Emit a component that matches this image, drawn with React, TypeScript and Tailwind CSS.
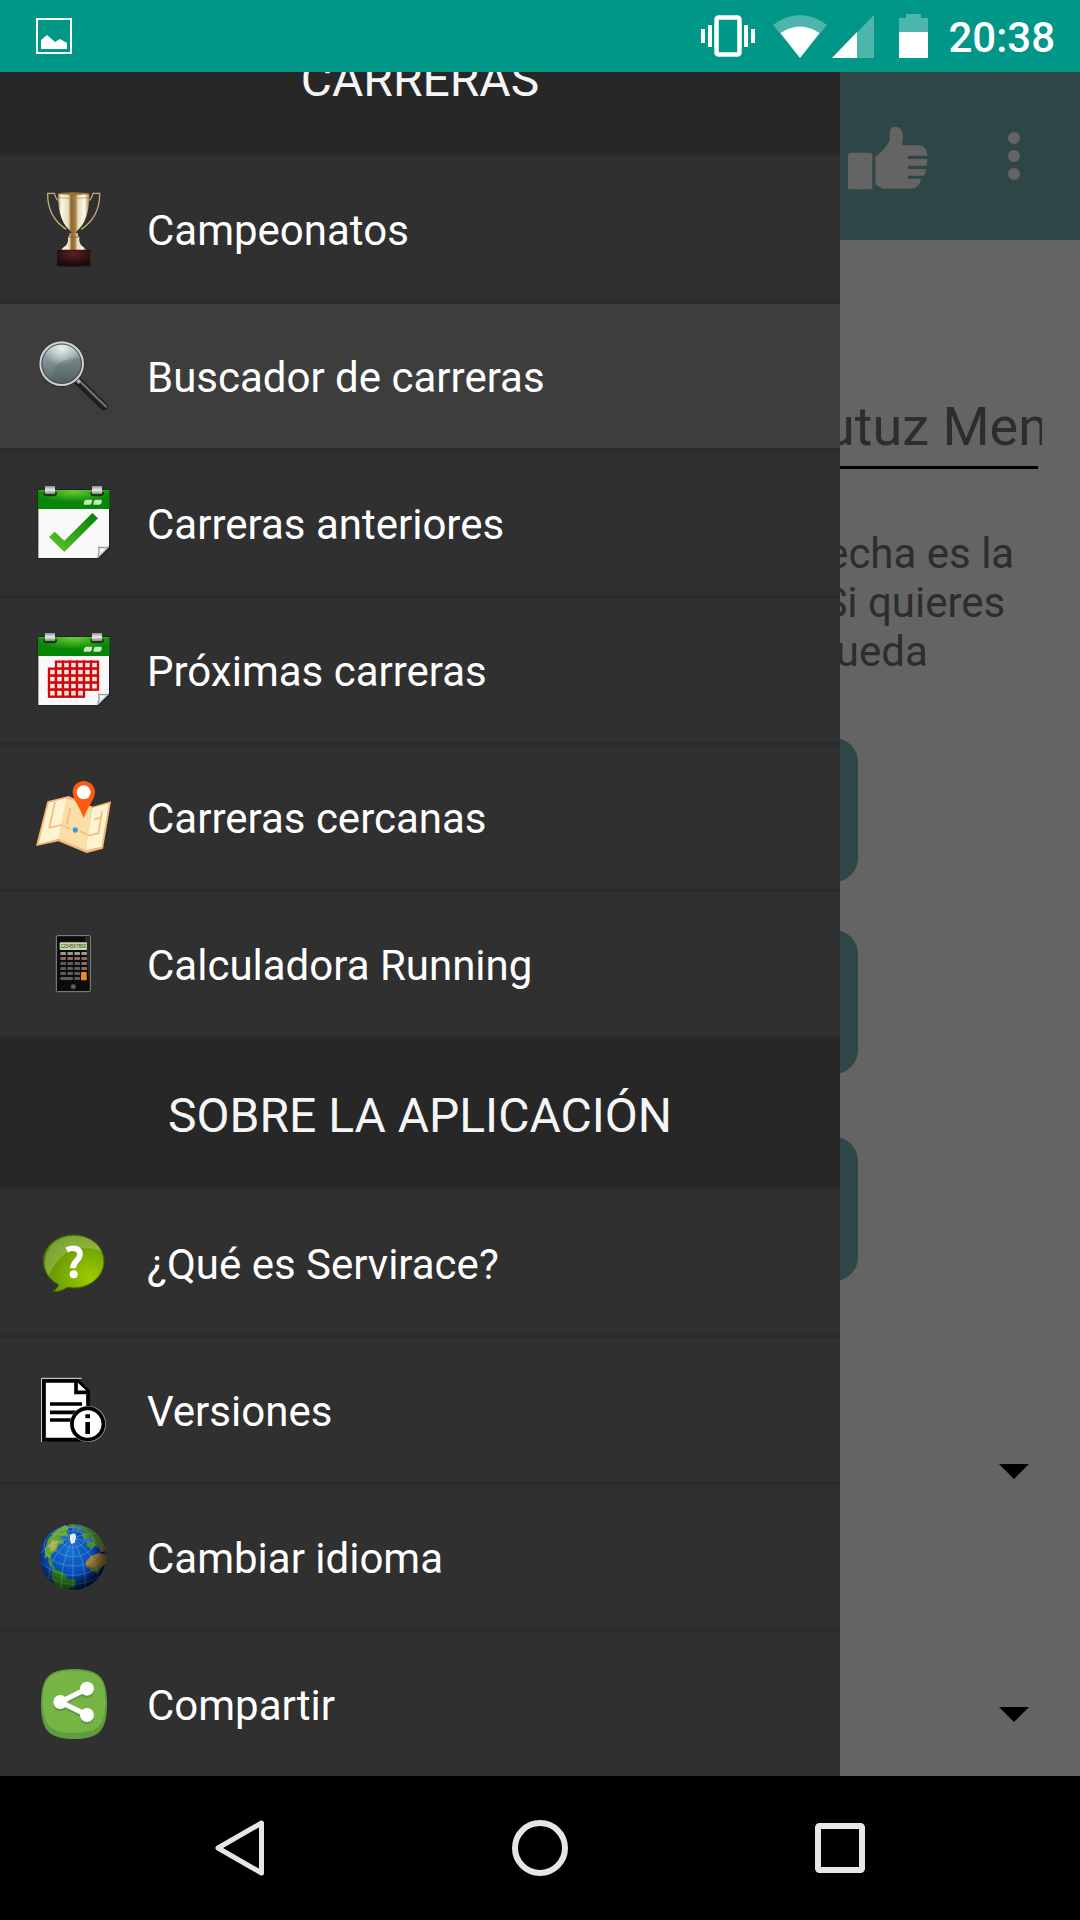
import React from "react";

const Trophy = () => (
  <svg viewBox="0 0 240 240" className="size-20 shrink-0" aria-hidden="true">
    <defs>
      <linearGradient id="cup" x1="0" x2="1">
        <stop offset="0" stopColor="#a58445" />
        <stop offset=".1" stopColor="#fdf8e6" />
        <stop offset=".33" stopColor="#e9ddb9" />
        <stop offset=".42" stopColor="#8a6530" />
        <stop offset=".56" stopColor="#a98241" />
        <stop offset=".64" stopColor="#e8dcb8" />
        <stop offset=".85" stopColor="#fffbea" />
        <stop offset="1" stopColor="#9c7d42" />
      </linearGradient>
      <radialGradient id="plinth" cy=".3" r=".7">
        <stop offset="0" stopColor="#5a2224" />
        <stop offset="1" stopColor="#1f0708" />
      </radialGradient>
    </defs>
    <ellipse cx="119" cy="229" rx="57" ry="4" fill="#141414" />
    <g fill="none" stroke="#c8ab70" strokeWidth="4">
      <path d="M76 35C66 34 64 22 61 13H41C40 60 62 98 96 121" />
      <path d="M162 35c10-1 12-13 15-22h20c1 47-21 85-55 108" />
    </g>
    <path d="M72 14h94c1 45-9 83-31 106q-8 6-10 13h-12q-2-7-10-13C81 97 71 59 72 14Z" fill="url(#cup)" />
    <ellipse cx="119" cy="14" rx="47" ry="4" fill="#9b7434" />
    <path d="M73 26q46 5 92 0" stroke="#a98c52" strokeWidth="2" fill="none" />
    <path d="M106 132h26q-4 6 4 12-2 18 7 26 10 6 14 13H81q4-7 14-13 9-8 7-26 8-6 4-12Z" fill="url(#cup)" />
    <path d="M103 144h32" stroke="#8a6530" strokeWidth="3" />
    <rect x="69" y="182" width="100" height="46" rx="2" fill="url(#plinth)" />
  </svg>
);

const Magnifier = () => (
  <svg viewBox="42 78 240 240" className="size-20 shrink-0" aria-hidden="true">
    <defs>
      <linearGradient id="lens" x2="0" y2="1">
        <stop offset="0" stopColor="#b9caca" />
        <stop offset=".45" stopColor="#7d9092" />
        <stop offset="1" stopColor="#536063" />
      </linearGradient>
      <radialGradient id="shine" cx=".5" cy=".12" r=".45">
        <stop offset="0" stopColor="#fff" stopOpacity=".75" />
        <stop offset="1" stopColor="#fff" stopOpacity="0" />
      </radialGradient>
    </defs>
    <path d="M178 218l74 71" stroke="#1d1d1d" strokeWidth="24" strokeLinecap="round" />
    <path d="M184 218l74 72" stroke="#6c6e72" strokeWidth="7" strokeLinecap="round" />
    <path d="M166 204l14 14" stroke="#b0b0b0" strokeWidth="11" />
    <circle cx="125" cy="161" r="69" fill="#242424" />
    <circle cx="125" cy="161" r="64" fill="url(#lens)" stroke="#d4d0d0" strokeWidth="6" />
    <circle cx="125" cy="161" r="59" fill="url(#shine)" stroke="#3f4a4c" strokeWidth="3" />
    <path d="M97 206c2-38 22-62 86-62 8 40-18 75-57 75-12 0-22-5-29-13Z" fill="#465558" opacity=".25" />
  </svg>
);

function Calendar({ id, children }: { id: string; children: React.ReactNode }) {
  return (
    <svg viewBox="0 0 240 240" className="size-20 shrink-0" aria-hidden="true">
      <defs>
        <radialGradient id={id + "-top"} cx=".5" cy=".1" r=".55">
          <stop offset="0" stopColor="#66c830" />
          <stop offset="1" stopColor="#078507" />
        </radialGradient>
        <linearGradient id={id + "-ring"} x2="0" y2="1">
          <stop offset="0" stopColor="#8f8f8f" />
          <stop offset=".5" stopColor="#ececec" />
          <stop offset="1" stopColor="#858585" />
        </linearGradient>
      </defs>
      <path d="M10 18h219v177l-34 33H10Z" fill="#202020" />
      <path d="M13 78h212v114l-34 33H13Z" fill="#f9f9f9" />
      <path d="M12 21h215v57H12Z" fill={"url(#" + id + "-top)"} />
      <path d="M13 22h213" stroke="#7ccf55" strokeWidth="2" opacity=".6" />
      <path d="M28 28h41v6q-3 6-9 6H36q-7 0-8-6Zm141 0h41v6q-3 6-9 6h-24q-7 0-8-6Z" fill="#143d0c" />
      <path d="M33 9h30v24H33Zm141 0h30v24h-30Z" fill={"url(#" + id + "-ring)"} />
      <path d="M155 50h20l-2 10-4 5h-20l1-9Zm28 0h20v9l-5 6h-20l1-9Z" fill="#c5e9c0" />
      {children}
      <path d="M191 225l34-33q-12 4-31 0 4 15-3 33Z" fill="#ddd" stroke="#888" strokeWidth="3" />
      <path d="M198 211l14-14h-12Z" fill="#fff" />
    </svg>
  );
}

const CheckCalendar = () => (
  <Calendar id="done">
    <defs>
      <linearGradient id="tick" x1="0" x2="1" y1="1" y2="0">
        <stop offset="0" stopColor="#5fc832" />
        <stop offset="1" stopColor="#067d06" />
      </linearGradient>
    </defs>
    <path d="M45 162l17-16 29 27 84-83 17 16-101 101Z" fill="url(#tick)" />
  </Calendar>
);

const dayCells = Array.from({ length: 35 }, (_, i) => i).filter((i) => i !== 0 && i < 33);

const GridCalendar = () => (
  <Calendar id="next">
    {dayCells.map((i) => (
      <rect
        key={i}
        x={45 + (i % 7) * 21}
        y={95 + Math.floor(i / 7) * 21}
        width="21"
        height="21"
        fill="#f6e4e4"
        stroke="#d00808"
        strokeWidth="7"
      />
    ))}
  </Calendar>
);

const MapPin = () => (
  <svg viewBox="42 501 240 240" className="size-20 shrink-0" aria-hidden="true">
    <path d="M82 574l64-16 72 32 55-16-24 142-49 13-85-35-67 14Z" fill="#f2b877" />
    <path d="M86 579l54-15-24 122-60 15Z" fill="#fff3d0" />
    <path d="M140 564l75 31-17 126-82-35Z" fill="#fbdfa6" />
    <path d="M215 595l51-14-22 129-46 11Z" fill="#fff3d0" />
    <path d="M215 595l-8 62 10-64 12-16Z" fill="#e2b981" />
    <g fill="none" stroke="#edbd85" strokeWidth="5">
      <path d="M105 576l-17 77 36-8 28 12M151 594l-11 50M179 664l30 13 27-8 10-66M223 628l18-5" />
    </g>
    <path d="M191 513c19 0 34 15 34 34 0 20-23 45-34 78-11-33-33-58-33-78 0-19 14-34 33-34Z" fill="#ff5a12" />
    <circle cx="191" cy="547" r="21" fill="#fff" />
    <circle cx="166" cy="660" r="8" fill="#4a9bd0" />
  </svg>
);

const Calculator = () => (
  <svg viewBox="42 162 240 240" className="size-20 shrink-0" aria-hidden="true">
    <rect x="109" y="197" width="102" height="168" rx="4" fill="#0c0c0c" stroke="#8d8d8d" strokeWidth="3" />
    <path d="M195 199h13v150Z" fill="#2b2b2b" />
    <rect x="119" y="217" width="82" height="23" rx="3" fill="#c9d9a8" />
    <text x="160" y="233" textAnchor="middle" fontSize="14" fontFamily="Liberation Sans, sans-serif" fill="#2e3a22">
      1234567890
    </text>
    {[0, 1, 2, 3, 4, 5].map((r) =>
      [0, 1, 2, 3].map((c) =>
        r > 3 && c === 3 ? null : (
          <rect
            key={r + "-" + c}
            x={121 + c * 21}
            y={246 + r * 15}
            width={r === 5 && c === 0 ? 24 : 17}
            height="9"
            rx="2"
            fill={r === 0 ? "#999" : r === 1 || c === 3 ? "#96685b" : "#5c5c5c"}
          />
        ),
      ),
    )}
    <rect x="183" y="306" width="17" height="25" rx="2" fill="#f58a1f" />
    <circle cx="160" cy="350" r="8" fill="#4b4b4b" />
    <rect x="157" y="347" width="6" height="6" fill="#777" />
  </svg>
);

const HelpBubble = () => (
  <svg viewBox="42 69 240 240" className="size-20 shrink-0" aria-hidden="true">
    <defs>
      <radialGradient id="bubble" cx=".75" cy=".75" r=".8">
        <stop offset="0" stopColor="#9ccc00" />
        <stop offset="1" stopColor="#5c8c06" />
      </radialGradient>
    </defs>
    <path
      d="M161 105c51 0 91 35 91 79s-40 80-91 80l-19-2c-12 9-27 14-44 12 8-4 14-11 18-20-28-14-46-40-46-70 0-44 40-79 91-79Z"
      fill="url(#bubble)"
      stroke="#3f6604"
      strokeWidth="3"
    />
    <path d="M86 228c-30-54 8-120 75-120 42 0 72 18 84 46-60-24-128-8-159 74Z" fill="#fff" opacity=".2" />
    <path d="M140 150c20-10 41-5 40 14-2 18-21 18-21 41" fill="none" stroke="#fff" strokeWidth="17" />
    <circle cx="161" cy="223" r="12" fill="#fff" />
  </svg>
);

const DocumentInfo = () => (
  <svg viewBox="42 510 240 240" className="size-20 shrink-0" aria-hidden="true">
    <path d="M65 726V535h120" fill="none" stroke="#ddd" strokeWidth="3" />
    <path d="M72 543h101l31 31v145H72Z" fill="#fff" stroke="#000" strokeWidth="11" />
    <path d="M168 543v34h36" fill="#fff" stroke="#000" strokeWidth="11" />
    <path d="M90 612h96M90 637h80M90 660h66" stroke="#000" strokeWidth="11" />
    <circle cx="204" cy="672" r="54" fill="#999" />
    <circle cx="203" cy="672" r="47" fill="#fff" stroke="#000" strokeWidth="11" />
    <path d="M196 643h14v12h-14Zm0 23h14v36h-14Z" fill="#000" />
  </svg>
);

const Globe = () => (
  <svg viewBox="42 81 240 240" className="size-20 shrink-0" aria-hidden="true">
    <defs>
      <radialGradient id="sea" cx=".45" cy=".42" r=".6">
        <stop offset="0" stopColor="#1674d2" />
        <stop offset=".6" stopColor="#084bb4" />
        <stop offset="1" stopColor="#021c50" />
      </radialGradient>
      <radialGradient id="shade" cx=".42" cy=".42" r=".6">
        <stop offset=".6" stopColor="#000" stopOpacity="0" />
        <stop offset="1" stopColor="#000" stopOpacity=".6" />
      </radialGradient>
      <clipPath id="disc">
        <circle cx="159" cy="201" r="99" />
      </clipPath>
    </defs>
    <circle cx="159" cy="201" r="99" fill="url(#sea)" />
    <g clipPath="url(#disc)">
      <path d="M76 176l8-28 22-26 28-18 14 8-10 14 10 8-14 10-4 16-14 4-8 20-14 8-2 14-10-6-8 6Z" fill="#63a52c" />
      <path d="M84 166l16-16 14 2-6 22-14 12Z" fill="#a8b05a" />
      <path d="M84 204l10 6 2 14 10 10-6 4-14-18Z" fill="#4f9324" />
      <path d="M96 236l20 4 20 14 6 12 28 4-6 18-22 14-28-2-12-22-8-18Z" fill="#2a7d18" />
      <path d="M146 98h50l38 28 22 38-10 14-14-12-18 10-16-8 4-16-14-8-2-18-20-10-20-4Z" fill="#4a8a26" />
      <path d="M160 108l20 4 14 14-6 6-14-10-16-2ZM118 140l18-6 4 12-16 10ZM196 146l14-6 10 14-12 8Z" fill="#2f70ab" />
      <path d="M198 214l14-16 22-8 24 4v26l-20 20-24-2-16-10Z" fill="#a17b34" />
      <path d="M198 224l22 10 30-12-16 26-22-6Z" fill="#5a7423" />
      <path d="M236 166l18-4 4 20-14 4Z" fill="#8e6b34" />
      <path d="M150 134l14-4 4 10-4 18-10 4-4-12Z" fill="#f4f8fb" />
      <g fill="none" stroke="#b8dcff" strokeWidth="2" opacity=".42">
        <ellipse cx="159" cy="143" rx="14" ry="9" />
        <ellipse cx="159" cy="147" rx="36" ry="25" />
        <ellipse cx="159" cy="156" rx="62" ry="44" />
        <ellipse cx="159" cy="168" rx="86" ry="60" />
        <path d="M62 218q97 76 194 0M84 262q75 44 150 0M159 145v155M159 145q-36 70-36 150M159 145q-72 50-74 120M159 145q38 70 38 150M159 145q72 50 76 120M159 145q-70 10-97 45M159 145q70 10 97 45M159 145q-36-16-70-14M159 145q36-16 70-14M159 145l-25-40M159 145l25-40M159 145v-44" />
      </g>
      <circle cx="159" cy="201" r="99" fill="url(#shade)" />
    </g>
  </svg>
);

const Share = () => (
  <svg viewBox="42 522 240 240" className="size-20 shrink-0" aria-hidden="true">
    <path d="M162 537c74 0 99 24 99 105s-25 105-99 105-99-24-99-105 25-105 99-105Z" fill="#5f9b41" />
    <path d="M162 542c70 0 94 20 94 93s-24 93-94 93-94-20-94-93 24-93 94-93Z" fill="#76b544" />
    <g transform="translate(0 7)" stroke="#5f9b41" fill="#5f9b41">
      <path d="M201 596l-80 40 80 39" fill="none" strokeWidth="15" />
      <circle cx="201" cy="596" r="21" stroke="none" />
      <circle cx="121" cy="636" r="21" stroke="none" />
      <circle cx="201" cy="675" r="21" stroke="none" />
    </g>
    <path d="M201 596l-80 40 80 39" fill="none" stroke="#fff" strokeWidth="15" />
    <circle cx="201" cy="596" r="21" fill="#fff" />
    <circle cx="121" cy="636" r="21" fill="#fff" />
    <circle cx="201" cy="675" r="21" fill="#fff" />
  </svg>
);

type Item = { label: string; icon: () => React.JSX.Element; active?: boolean };

const sections: { title: string; items: Item[] }[] = [
  {
    title: "CARRERAS",
    items: [
      { label: "Campeonatos", icon: Trophy },
      { label: "Buscador de carreras", icon: Magnifier, active: true },
      { label: "Carreras anteriores", icon: CheckCalendar },
      { label: "Próximas carreras", icon: GridCalendar },
      { label: "Carreras cercanas", icon: MapPin },
      { label: "Calculadora Running", icon: Calculator },
    ],
  },
  {
    title: "SOBRE LA APLICACIÓN",
    items: [
      { label: "¿Qué es Servirace?", icon: HelpBubble },
      { label: "Versiones", icon: DocumentInfo },
      { label: "Cambiar idioma", icon: Globe },
      { label: "Compartir", icon: Share },
    ],
  },
];

function StatusBar() {
  return (
    <header className="flex h-[72px] shrink-0 items-center bg-[#009688] pr-[25px] pl-9 text-white">
      <svg viewBox="0 0 36 36" className="mr-auto size-9" aria-hidden="true">
        <path d="M1 1h34v34H1Z" fill="none" stroke="currentColor" strokeWidth="2" />
        <path d="M5 31v-9l6-5 8 7 5-3 7 4v6Z" fill="currentColor" />
      </svg>
      <svg viewBox="0 0 54 42" className="mr-[18px] h-[42px] w-[54px]" aria-hidden="true">
        <rect x="15.500" y="2.500" width="23" height="37" rx="2" fill="none" stroke="currentColor" strokeWidth="4.500" />
        <path d="M0 14h4v14H0ZM7 10h4v22H7ZM43 10h4v22h-4ZM50 14h4v14h-4Z" fill="currentColor" />
      </svg>
      <svg viewBox="0 0 54 43" className="mr-[5px] h-[43px] w-[54px]" aria-hidden="true">
        <path d="M0 10q27-20 54 0L27 43Z" fill="currentColor" opacity=".3" />
        <path d="M7.500 18q19.500-13 39 0L27 43Z" fill="currentColor" />
      </svg>
      <svg viewBox="0 0 42 43" className="mr-[25px] h-[43px] w-[42px]" aria-hidden="true">
        <path d="M0 43 42 0v43Z" fill="currentColor" opacity=".3" />
        <path d="M0 43 25 17v26Z" fill="currentColor" />
      </svg>
      <svg viewBox="0 0 29 44" className="mr-5 h-11 w-[29px]" aria-hidden="true">
        <path d="M0 4h7V0h15v4h7v14H0Z" fill="currentColor" opacity=".3" />
        <path d="M0 18h29v26H0Z" fill="currentColor" />
      </svg>
      <time className="pt-1 text-[42px] leading-none font-medium">20:38</time>
    </header>
  );
}

function Drawer() {
  return (
    <nav
      aria-label="Menú"
      className="absolute inset-y-0 left-0 flex w-7/9 flex-col justify-end overflow-hidden bg-[#303030]"
    >
      {sections.map((section, index) => (
        <section key={section.title} className="shrink-0">
          <h2
            className={
              index > 0
                ? "flex h-[155px] items-center justify-center border-y-3 border-[#2b2b2b] bg-[#272727] pt-1 text-[48px] text-[#f5f5f5]"
                : "flex h-[155px] items-center justify-center border-b-3 border-[#2b2b2b] bg-[#272727] pt-1 text-[48px] text-[#f5f5f5]"
            }
          >
            {section.title}
          </h2>
          <ul className="divide-y-3 divide-[#2a2a2a]">
            {section.items.map(({ label, icon: Icon, active }) => (
              <li key={label}>
                <button
                  type="button"
                  className={
                    active
                      ? "flex h-36 w-full items-center gap-[33px] bg-[#3d3d3d] pl-[34px] text-left text-[42px] text-white"
                      : "flex h-36 w-full items-center gap-[33px] pl-[34px] text-left text-[42px] text-white"
                  }
                >
                  <Icon />
                  <span className="pt-0.5">{label}</span>
                </button>
              </li>
            ))}
          </ul>
        </section>
      ))}
    </nav>
  );
}

function Spinner({ label }: { label: string }) {
  return (
    <div className="relative mx-9 h-24">
      <select aria-label={label} className="size-full appearance-none bg-transparent" />
      <svg viewBox="0 0 30 15" className="absolute top-10 right-[15px] h-[15px] w-[30px]" aria-hidden="true">
        <path d="M0 0h30L15 15Z" fill="#000" />
      </svg>
    </div>
  );
}

function SearchPage() {
  return (
    <div className="flex-1 overflow-hidden bg-[#646464] text-[#2d2d2d]">
      <div className="flex h-[168px] items-center justify-end bg-[#2f4646] pr-[60px] text-[#646464]">
        <button type="button" aria-label="Me gusta" className="mr-[80px] pt-1">
          <svg viewBox="0 0 240 192" className="h-16 w-20" fill="currentColor" aria-hidden="true">
            <rect x="0" y="80" width="73" height="110" rx="8" />
            <path d="M82 92q30-22 43-48V18q2-16 18-16 22 2 22 28l-3 28h52q24 2 24 31h-58v10h58l-1 20h-57v10h54q-1 14-6 20h-48v9h39q-5 30-31 30h-84l-22-13Z" />
          </svg>
        </button>
        <button type="button" aria-label="Más opciones">
          <svg viewBox="0 0 12 48" className="h-12 w-3" fill="currentColor" aria-hidden="true">
            <circle cx="6" cy="6" r="6" />
            <circle cx="6" cy="24" r="6" />
            <circle cx="6" cy="42" r="6" />
          </svg>
        </button>
      </div>
      <div className="mr-[38px] ml-[75%] pt-[150px]">
        <input
          aria-label="Carrera"
          defaultValue="utuz Mend"
          className="block h-[72px] w-full bg-transparent pl-[15px] text-[54px] outline-none"
        />
        <div className="mt-1 mr-1 h-[3px] bg-black" />
      </div>
      <p className="mt-[60px] ml-[75%] pl-0.5 text-[42px] leading-[49px] whitespace-nowrap">
        fecha es la
        <br />
        &nbsp;Si quieres
        <br />
        queda
      </p>
      <div className="mx-auto mt-[62px] flex w-[636px] flex-col">
        <button type="button" aria-label="Buscar" className="h-36 rounded-3xl bg-[#2f4646]" />
        <button type="button" aria-label="Limpiar" className="mt-12 h-36 rounded-3xl bg-[#2f4646]" />
        <button type="button" aria-label="Filtrar" className="mt-[63px] h-36 rounded-3xl bg-[#2f4646]" />
      </div>
      <div className="mt-[143px] flex flex-col gap-[147px]">
        <Spinner label="Provincia" />
        <Spinner label="Distancia" />
      </div>
    </div>
  );
}

function NavigationBar() {
  return (
    <footer className="flex h-36 shrink-0 items-center justify-center gap-[244px] bg-black text-[#e6e6e6]">
      <button type="button" aria-label="Atrás">
        <svg viewBox="0 0 56 56" className="size-14" fill="none" stroke="currentColor" strokeWidth="5" strokeLinejoin="round" aria-hidden="true">
          <path d="M49.500 3v50L6 28Z" />
        </svg>
      </button>
      <button type="button" aria-label="Inicio">
        <svg viewBox="0 0 56 56" className="size-14" fill="none" stroke="currentColor" strokeWidth="6" aria-hidden="true">
          <circle cx="28" cy="28" r="25" />
        </svg>
      </button>
      <button type="button" aria-label="Recientes">
        <svg viewBox="0 0 56 56" className="size-14" fill="none" stroke="currentColor" strokeWidth="6" aria-hidden="true">
          <rect x="6" y="6" width="44" height="44" rx="1.500" />
        </svg>
      </button>
    </footer>
  );
}

export default function App() {
  return (
    <div className="flex h-screen flex-col overflow-hidden font-[Roboto,sans-serif]">
      <StatusBar />
      <main className="relative flex min-h-0 flex-1 flex-col">
        <SearchPage />
        <Drawer />
      </main>
      <NavigationBar />
    </div>
  );
}
